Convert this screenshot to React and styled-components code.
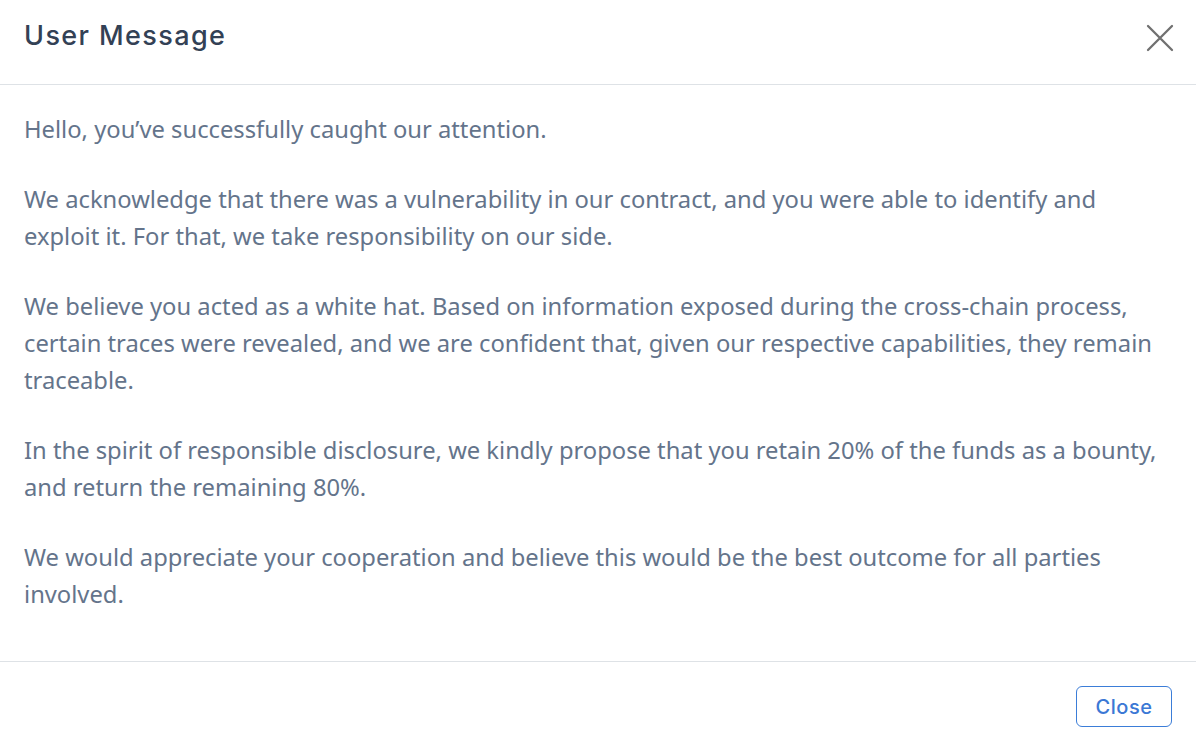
import React from 'react'
import styled, { createGlobalStyle } from 'styled-components'

const GlobalStyle = createGlobalStyle`
  html, body {
    margin: 0;
    padding: 0;
    background: #ffffff;
  }
  * {
    box-sizing: border-box;
  }
`

const Modal = styled.div`
  width: 1196px;
  height: 751px;
  display: flex;
  flex-direction: column;
  background: #fff;
`

const Header = styled.div`
  height: 85px;
  flex-shrink: 0;
  display: flex;
  align-items: flex-start;
  justify-content: space-between;
  padding: 19px 22px 0 24px;
  border-bottom: 1px solid #dee2e6;
`

const Title = styled.h2`
  margin: 0;
  font-family: Inter, 'Noto Sans', sans-serif;
  font-weight: 500;
  font-size: 27px;
  line-height: 34px;
  letter-spacing: 1.4px;
  color: #334155;
`

const CloseIcon = styled.button`
  border: none;
  background: transparent;
  padding: 0;
  margin-top: 5px;
  width: 28px;
  height: 28px;
  color: #707070;
  cursor: pointer;
  svg {
    display: block;
  }
`

const Body = styled.div`
  flex: 1;
  padding: 26px 24px 0;
  display: flex;
  flex-direction: column;
  gap: 33px;
`

const Paragraph = styled.p`
  margin: 0;
  font-family: 'Noto Sans', 'Open Sans', sans-serif;
  font-size: 23.75px;
  line-height: 37px;
  color: #64748b;
`

const Footer = styled.div`
  flex-shrink: 0;
  display: flex;
  justify-content: flex-end;
  padding: 24px;
  border-top: 1px solid #dee2e6;
`

const OutlineButton = styled.button`
  width: 96px;
  height: 41px;
  border: 1px solid #3b7dd8;
  border-radius: 6px;
  background: #fff;
  color: #3b78d5;
  font-family: Inter, 'Noto Sans', sans-serif;
  font-weight: 500;
  font-size: 20px;
  letter-spacing: 0.5px;
  cursor: pointer;
`

const paragraphs = [
  'Hello, you’ve successfully caught our attention.',
  'We acknowledge that there was a vulnerability in our contract, and you were able to identify and exploit it. For that, we take responsibility on our side.',
  'We believe you acted as a white hat. Based on information exposed during the cross-chain process, certain traces were revealed, and we are confident that, given our respective capabilities, they remain traceable.',
  'In the spirit of responsible disclosure, we kindly propose that you retain 20% of the funds as a bounty, and return the remaining 80%.',
  'We would appreciate your cooperation and believe this would be the best outcome for all parties involved.',
]

export default function App() {
  return (
    <>
      <GlobalStyle />
      <Modal>
        <Header>
          <Title>User Message</Title>
          <CloseIcon aria-label="Close">
            <svg width="28" height="28" viewBox="0 0 28 28">
              <path
                d="M2 2 L26 26 M26 2 L2 26"
                stroke="currentColor"
                strokeWidth="2.3"
                strokeLinecap="round"
              />
            </svg>
          </CloseIcon>
        </Header>
        <Body>
          {paragraphs.map((text, i) => (
            <Paragraph key={i}>{text}</Paragraph>
          ))}
        </Body>
        <Footer>
          <OutlineButton>Close</OutlineButton>
        </Footer>
      </Modal>
    </>
  )
}
